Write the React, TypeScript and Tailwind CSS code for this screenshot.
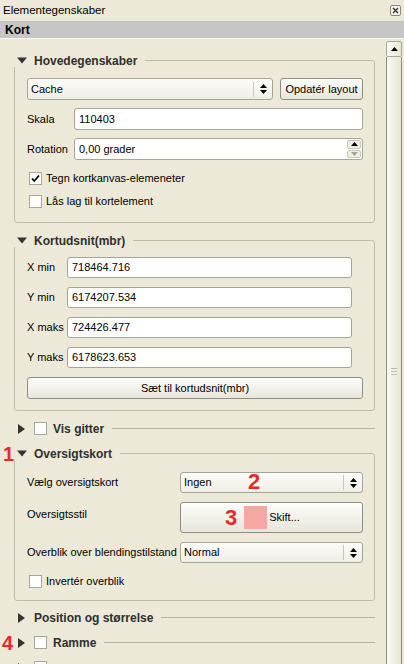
import React from 'react';

// small glyphs drawn as svg
const DownTri = () => (
  <svg width="10" height="7" viewBox="0 0 10 7" className="shrink-0">
    <path d="M0 0.5H10L5 6.5Z" fill="#333" />
  </svg>
);

const RightTri = () => (
  <svg width="7" height="10" viewBox="0 0 7 10" className="shrink-0">
    <path d="M0 0L7 5L0 10Z" fill="#333" />
  </svg>
);

const UpDown = () => (
  <svg width="7" height="10" viewBox="0 0 7 10">
    <path d="M3.5 0L7 4H0Z M0 6H7L3.5 10Z" fill="#000" />
  </svg>
);

function Check({ checked }: { checked?: boolean }) {
  return (
    <div className="w-[13px] h-[13px] shrink-0 bg-white border border-[#a7a699] flex items-center justify-center">
      {checked && (
        <svg width="9" height="9" viewBox="0 0 9 9">
          <path d="M1 4.5L3.3 7L8 1.5" stroke="#000" strokeWidth="1.8" fill="none" />
        </svg>
      )}
    </div>
  );
}

function CheckRow({ label, checked }: { label: string; checked?: boolean }) {
  return (
    <div className="flex items-center h-[13px] pl-[2px] gap-[4px]">
      <Check checked={checked} />
      <span>{label}</span>
    </div>
  );
}

function Input({ value, h = 'h-[22px]' }: { value: string; h?: string }) {
  return (
    <div className={`flex-1 ${h} bg-white border border-[#a5a497] rounded-[3px] pl-[4px] flex items-center`}>
      {value}
    </div>
  );
}

function Combo({ value, className, children }: { value: string; className?: string; children?: React.ReactNode }) {
  return (
    <div className={`relative flex items-center border border-[#a5a497] rounded-[3px] bg-gradient-to-b from-[#fcfcf9] to-[#efeee5] ${className}`}>
      <span className="flex-1 pl-[3px]">{value}</span>
      <div className="w-[19px] h-[15px] border-l border-[#c8c7bb] flex items-center justify-center">
        <UpDown />
      </div>
      {children}
    </div>
  );
}

function Btn({ children, className }: { children: React.ReactNode; className?: string }) {
  return (
    <div className={`flex items-center border border-[#8f8e82] rounded-[3px] bg-gradient-to-b from-[#fdfdfb] to-[#e8e6d9] ${className}`}>
      {children}
    </div>
  );
}

function GroupBox({ title, children, className, mark }: { title: string; children: React.ReactNode; className?: string; mark?: string }) {
  return (
    <div className={`border border-[#bcbbae] rounded-[3px] pl-[12px] pr-[11px] ${className}`}>
      <div className="relative -mt-[7px] -ml-[13px] w-fit bg-[#ece9d8] pl-[3px] pr-[8px] h-[13px] flex items-center gap-[7px]">
        {mark && (
          <span className="absolute left-[-11px] top-[-3px] text-[20px] leading-[20px] font-bold text-[#e32b2b]">{mark}</span>
        )}
        <DownTri />
        <span className="font-bold text-[12px] text-[#2f2f2f]">{title}</span>
      </div>
      {children}
    </div>
  );
}

function Collapsed({ title, box, className, mark }: { title?: string; box?: boolean; className?: string; mark?: string }) {
  return (
    <div className={`relative flex items-center h-[13px] pl-[4px] ${className}`}>
      {mark && (
        <span className="absolute left-[-12px] top-[-3px] text-[20px] leading-[20px] font-bold text-[#e32b2b]">{mark}</span>
      )}
      <RightTri />
      {box ? (
        <>
          <div className="ml-[9px]"><Check /></div>
          {title && <span className="ml-[6px] font-bold text-[12px] text-[#2f2f2f]">{title}</span>}
        </>
      ) : (
        <span className="ml-[9px] font-bold text-[12px] text-[#2f2f2f]">{title}</span>
      )}
      {title && <div className="flex-1 ml-[8px] h-px bg-[#b3b2a6]" />}
    </div>
  );
}

export default function App() {
  return (
    <div className="w-[404px] h-[664px] overflow-hidden bg-[#ece9d8] text-[11px] text-black font-['Liberation_Sans',Arial,sans-serif] flex flex-col">
      {/* dock title */}
      <div className="h-[21px] shrink-0 flex items-center justify-between pl-[3px] pr-[3px]">
        <span className="text-[11.5px]">Elementegenskaber</span>
        <svg width="11" height="11" viewBox="0 0 11 11">
          <rect x="0.5" y="0.5" width="10" height="10" rx="1.5" fill="#f4f3ee" stroke="#8a897e" />
          <path d="M3 3L8 8M8 3L3 8" stroke="#333" strokeWidth="1.4" />
        </svg>
      </div>
      <div className="h-[17px] shrink-0 bg-[#c6c6c6] pl-[5px] flex items-center font-bold text-[12px]">Kort</div>

      <div className="flex flex-1 min-h-0 border-t border-[#f7f6f0]">
        {/* scroll content */}
        <div className="flex-1 min-w-0 pl-[14px] pr-[11px] overflow-hidden">
          <GroupBox title="Hovedegenskaber" className="mt-[21px] pb-[14px]">
            <div className="mt-[11px] flex">
              <Combo value="Cache" className="flex-1 h-[22px]" />
              <Btn className="ml-[7px] w-[83px] h-[22px] justify-center">Opdatér layout</Btn>
            </div>
            <div className="mt-[8px] flex items-center">
              <span className="w-[47px]">Skala</span>
              <Input value="110403" />
            </div>
            <div className="mt-[8px] flex items-center">
              <span className="w-[47px]">Rotation</span>
              <div className="flex-1 h-[22px] bg-white border border-[#a5a497] rounded-[3px] pl-[4px] flex items-center">
                <span className="flex-1">0,00 grader</span>
                <div className="w-[16px] h-full flex flex-col p-px gap-px">
                  <div className="flex-1 bg-[#f1efe4] border border-[#c9c7b8] rounded-[2px] flex items-center justify-center">
                    <svg width="7" height="4" viewBox="0 0 7 4"><path d="M3.5 0L7 4H0Z" fill="#000" /></svg>
                  </div>
                  <div className="flex-1 bg-[#f1efe4] border border-[#c9c7b8] rounded-[2px] flex items-center justify-center">
                    <svg width="7" height="4" viewBox="0 0 7 4"><path d="M0 0H7L3.5 4Z" fill="#a4a397" /></svg>
                  </div>
                </div>
              </div>
            </div>
            <div className="mt-[12px]"><CheckRow label="Tegn kortkanvas-elemeneter" checked /></div>
            <div className="mt-[10px]"><CheckRow label="Lås lag til kortelement" /></div>
          </GroupBox>

          <GroupBox title="Kortudsnit(mbr)" className="mt-[17px] pb-[11px]">
            <div className="mt-[10px] flex flex-col gap-[9px] pr-[11px]">
              {[
                ['X min', '718464.716'],
                ['Y min', '6174207.534'],
                ['X maks', '724426.477'],
                ['Y maks', '6178623.653'],
              ].map(([l, v]) => (
                <div key={l} className="flex items-center">
                  <span className="w-[40px]">{l}</span>
                  <Input value={v} h="h-[21px]" />
                </div>
              ))}
            </div>
            <Btn className="mt-[9px] h-[22px] justify-center">Sæt til kortudsnit(mbr)</Btn>
          </GroupBox>

          <Collapsed title="Vis gitter" box className="mt-[11px]" />

          <GroupBox title="Oversigtskort" mark="1" className="mt-[18px] pb-[12px]">
            <div className="mt-[12px] flex items-center">
              <span className="w-[153px]">Vælg oversigtskort</span>
              <Combo value="Ingen" className="flex-1 h-[21px]">
                <span className="absolute left-[67px] top-[-2px] text-[22px] leading-[22px] font-bold text-[#e32b2b]">2</span>
              </Combo>
            </div>
            <div className="mt-[9px] flex items-start">
              <span className="w-[153px] pt-[4px]">Oversigtsstil</span>
              <Btn className="flex-1 h-[31px] pl-[44px]">
                <span className="text-[22px] leading-[22px] font-bold text-[#e32b2b]">3</span>
                <div className="ml-[7px] w-[23px] h-[23px] bg-[#f4a7a3]" />
                <span className="ml-[2px]">Skift...</span>
              </Btn>
            </div>
            <div className="mt-[9px] flex items-center">
              <span className="w-[153px]">Overblik over blendingstilstand</span>
              <Combo value="Normal" className="flex-1 h-[21px]" />
            </div>
            <div className="mt-[12px]"><CheckRow label="Invertér overblik" /></div>
          </GroupBox>

          <Collapsed title="Position og størrelse" className="mt-[10px]" />
          <Collapsed title="Ramme" box mark="4" className="mt-[12px]" />
          <Collapsed box className="mt-[12px]" />
        </div>

        {/* vertical scrollbar */}
        <div className="w-[18px] shrink-0 pt-[2px] pr-[2px] flex flex-col overflow-hidden">
          <div className="h-[16px] shrink-0 border border-[#a9a796] rounded-[2px] bg-gradient-to-r from-[#fdfcf6] to-[#e9e6d4] flex items-center justify-center">
            <svg width="7" height="4" viewBox="0 0 7 4"><path d="M3.5 0L7 4H0Z" fill="#000" /></svg>
          </div>
          <div className="h-[628px] shrink-0 border-x border-[#8f8d7f] bg-gradient-to-r from-[#fbfaf2] to-[#e9e6d3] flex flex-col items-center justify-center gap-[2px]">
            <div className="w-[6px] h-px bg-[#bdbbaa]" />
            <div className="w-[6px] h-px bg-[#bdbbaa]" />
            <div className="w-[6px] h-px bg-[#bdbbaa]" />
          </div>
        </div>
      </div>
    </div>
  );
}
